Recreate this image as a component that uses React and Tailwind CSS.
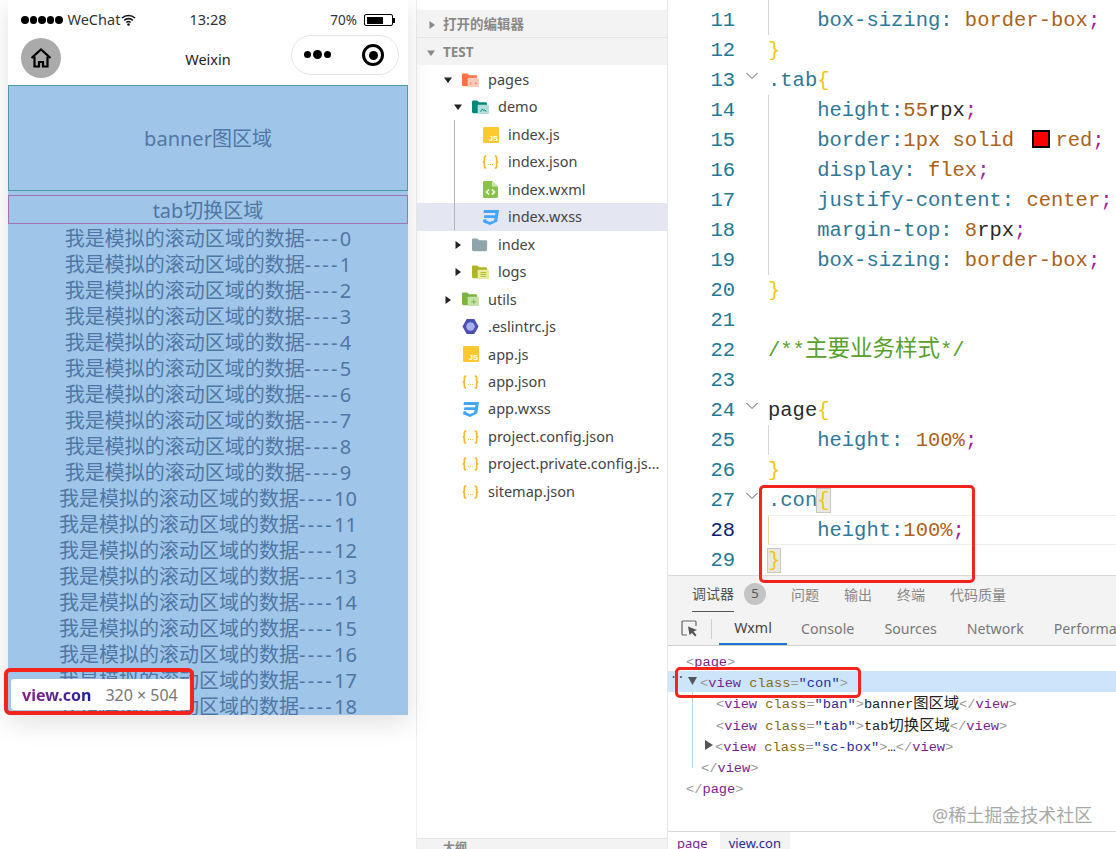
import React from "react";

const UI = "font-['Noto_Sans','Noto_Sans_CJK_SC',sans-serif]";
const MONO = "font-['Liberation_Mono','Noto_Sans_CJK_SC',monospace]";

function Caret({ open, dark, className = "" }) {
  const fill = dark ? "#222" : "#888";
  return (
    <svg width="8" height="8" viewBox="0 0 8 8" className={className}>
      {open ? <path d="M0 1.500h8L4 7z" fill={fill} /> : <path d="M1.500 0v8L7 4z" fill={fill} />}
    </svg>
  );
}

function FolderIcon({ color, light, mark }) {
  return (
    <svg width="18" height="16" viewBox="0 0 18 16">
      <path d="M0 2.500C0 1.500.7 1 1.500 1h4l2 2h7c.8 0 1.500.7 1.500 1.500V13c0 .8-.7 1.500-1.500 1.500h-13C.7 14.500 0 13.800 0 13z" fill={color} />
      {light && <rect x="6" y="5.500" width="12" height="10" rx="1" fill={light} />}
      {mark && <path d={mark} stroke={color} strokeWidth="1" fill="none" />}
    </svg>
  );
}

function JsIcon() {
  return (
    <svg width="16" height="16" viewBox="0 0 16 16">
      <rect width="16" height="16" rx="1" fill="#fdc92f" />
      <text x="15" y="14" textAnchor="end" fontSize="7.500" fontWeight="700" fill="#fff" fontFamily="Liberation Sans">JS</text>
    </svg>
  );
}

function JsonIcon() {
  return (
    <svg width="20" height="16" viewBox="0 0 20 16" fill="none" stroke="#f7b733" strokeWidth="2">
      <path d="M5 1H4C2.800 1 2.800 2 2.800 3v3C2.800 7 2 8 .8 8c1.200 0 2 1 2 2v3c0 1 0 2 1.200 2h1" />
      <path d="M15 1h1c1.200 0 1.200 1 1.200 2v3c0 1 .8 2 2 2-1.200 0-2 1-2 2v3c0 1 0 2-1.200 2h-1" />
      <path d="M7 11h1M9.500 11h1M12 11h1" strokeWidth="1.300" />
    </svg>
  );
}

function WxmlIcon() {
  return (
    <svg width="15" height="17" viewBox="0 0 15 17">
      <path d="M1.500 0H9l6 5.500V15.500c0 .8-.7 1.500-1.500 1.500h-12C.7 17 0 16.300 0 15.500v-14C0 .7.700 0 1.500 0z" fill="#8bc34a" />
      <path d="M9 0l6 5.500H9z" fill="#cfe8ad" />
      <path d="M6 8.500L3.500 11 6 13.500M9 8.500l2.500 2.500L9 13.500" stroke="#fff" strokeWidth="1.500" fill="none" />
    </svg>
  );
}

function CssIcon() {
  return (
    <svg width="17" height="15" viewBox="0 0 17 15">
      <path d="M2 0h15l-1.800 11.500L8 15l-7-2.800.5-3h3l-.3 1.400L8 12l4-1.400.5-2.500H1.900l.5-2.900h10.700l.4-2.300H1.500z" fill="#42a5f5" />
    </svg>
  );
}

function EslintIcon() {
  return (
    <svg width="18" height="17" viewBox="0 0 18 17">
      <path d="M5 .5h8l4.500 8-4.500 8H5L.5 8.500z" fill="#4b4fb0" />
      <circle cx="9" cy="8.500" r="4.500" fill="#a9b0ee" />
    </svg>
  );
}

const tree = [
  { name: "pages", depth: 0, caret: "open", icon: <FolderIcon color="#ff7043" light="#ffccbc" mark="M10 10.500l-1.500 1 1.500 1M14 10.500l1.500 1-1.500 1" /> },
  { name: "demo", depth: 1, caret: "open", icon: <FolderIcon color="#00897b" light="#b2dfdb" mark="M9 13l2-3 1.500 2 1-1 1.500 2" /> },
  { name: "index.js", depth: 2, icon: <JsIcon /> },
  { name: "index.json", depth: 2, icon: <JsonIcon /> },
  { name: "index.wxml", depth: 2, icon: <WxmlIcon /> },
  { name: "index.wxss", depth: 2, icon: <CssIcon />, active: true },
  { name: "index", depth: 1, caret: "closed", icon: <FolderIcon color="#90a4ae" /> },
  { name: "logs", depth: 1, caret: "closed", icon: <FolderIcon color="#afb42b" light="#e6ee9c" mark="M9 8.500h6M9 10.500h6M9 12.500h6" /> },
  { name: "utils", depth: 0, caret: "closed", icon: <FolderIcon color="#7cb342" light="#c5e1a5" mark="M10 11h5M12.500 8.500v5" /> },
  { name: ".eslintrc.js", depth: 0, icon: <EslintIcon /> },
  { name: "app.js", depth: 0, icon: <JsIcon /> },
  { name: "app.json", depth: 0, icon: <JsonIcon /> },
  { name: "app.wxss", depth: 0, icon: <CssIcon /> },
  { name: "project.config.json", depth: 0, icon: <JsonIcon /> },
  { name: "project.private.config.js...", depth: 0, icon: <JsonIcon /> },
  { name: "sitemap.json", depth: 0, icon: <JsonIcon /> },
];

const P = ({ children }) => <span className="text-[#2f7898]">{children}</span>;
const V = ({ children }) => <span className="text-[#ab6219]">{children}</span>;
const S = () => <span className="text-[#a31fa3]">;</span>;
const B = ({ children }) => <span className="text-[#f2c511]">{children}</span>;
const K = ({ children }) => <span className="text-[#2b2b2b]">{children}</span>;

const code = [
  { n: 10, guide: true, body: <>{"    "}<P>justify-content:</P>{" "}<V>center</V><S /></> },
  { n: 11, guide: true, body: <>{"    "}<P>box-sizing:</P>{" "}<V>border-box</V><S /></> },
  { n: 12, body: <B>{"}"}</B> },
  { n: 13, fold: true, body: <><P>.tab</P><B>{"{"}</B></> },
  { n: 14, guide: true, body: <>{"    "}<P>height:</P><V>55</V><K>rpx</K><S /></> },
  { n: 15, guide: true, body: <>{"    "}<P>border:</P><V>1px solid</V>{" "}<span className="inline-block w-[18px] h-[18px] bg-[#f00] border-2 border-black align-[-2px] ml-[6px] mr-[5px]"></span><V>red</V><S /></> },
  { n: 16, guide: true, body: <>{"    "}<P>display:</P>{" "}<V>flex</V><S /></> },
  { n: 17, guide: true, body: <>{"    "}<P>justify-content:</P>{" "}<V>center</V><S /></> },
  { n: 18, guide: true, body: <>{"    "}<P>margin-top:</P>{" "}<V>8</V><K>rpx</K><S /></> },
  { n: 19, guide: true, body: <>{"    "}<P>box-sizing:</P>{" "}<V>border-box</V><S /></> },
  { n: 20, body: <B>{"}"}</B> },
  { n: 21, body: "" },
  { n: 22, body: <span className="text-[#5aa02c]">/**<span className="text-[22.500px]">主要业务样式</span>*/</span> },
  { n: 23, body: "" },
  { n: 24, fold: true, body: <><K>page</K><B>{"{"}</B></> },
  { n: 25, guide: true, body: <>{"    "}<P>height:</P>{" "}<V>100%</V><S /></> },
  { n: 26, body: <B>{"}"}</B> },
  { n: 27, fold: true, body: <><P>.con</P><span className="bg-[#e8e8e0] outline outline-[#c8c8c0]"><B>{"{"}</B></span></> },
  { n: 28, current: true, guide: true, body: <>{"    "}<P>height:</P><V>100%</V><S /></> },
  { n: 29, body: <span className="bg-[#e8e8e0] outline outline-[#c8c8c0]"><B>{"}"}</B></span> },
];

const Tag = ({ children }) => <span className="text-[#7a1f8f]">{children}</span>;
const Attr = ({ children }) => <span className="text-[#8a6a10]">{children}</span>;
const Val = ({ children }) => <span className="text-[#1f2f9f]">{children}</span>;
const G = ({ children }) => <span className="text-[#999]">{children}</span>;
const Open = ({ cls }) => (
  <><G>{"<"}</G><Tag>view</Tag>{" "}<Attr>class</Attr><G>=</G><Val>"{cls}"</Val><G>{">"}</G></>
);
const Close = ({ name = "view" }) => <><G>{"</"}</G><Tag>{name}</Tag><G>{">"}</G></>;
const Cjk = ({ children }) => <span className="text-[15.300px] text-[#222]">{children}</span>;

function Phone() {
  return (
    <div className={`w-[400px] h-[715px] flex flex-col shadow-[0_8px_24px_rgba(0,0,0,0.12)] bg-white overflow-hidden ${UI}`}>
      <div className="h-[38px] shrink-0 grid grid-cols-[1fr_auto_1fr] items-center px-[13px] text-[14.500px] text-[#333] pt-[2px]">
        <div className="flex items-center">
          <div className="flex gap-[1px] mr-[5px]">
            {[0, 1, 2, 3, 4].map((i) => <span key={i} className="w-[7.500px] h-[7.500px] rounded-full bg-black"></span>)}
          </div>
          <span>WeChat</span>
          <svg width="15" height="12" viewBox="0 0 15 12" className="ml-[1px]">
            <path d="M1 4a9.500 9.500 0 0 1 13 0M3.200 6.300a6.300 6.300 0 0 1 8.600 0M5.300 8.500a3.300 3.300 0 0 1 4.400 0" stroke="#111" strokeWidth="1.600" fill="none" />
            <circle cx="7.500" cy="10.500" r="1.300" fill="#111" />
          </svg>
        </div>
        <span>13:28</span>
        <div className="flex items-center justify-end">
          <span className="text-[13.500px]">70%</span>
          <div className="ml-[7px] w-[29px] h-[12px] border border-black rounded-[2px] p-[1.500px]">
            <div className="w-[70%] h-full bg-black"></div>
          </div>
          <span className="w-[2px] h-[5px] bg-black"></span>
        </div>
      </div>
      <div className="h-[47px] shrink-0 grid grid-cols-[1fr_auto_1fr] items-start px-[13px] text-[14.500px] text-[#222]">
        <div className="w-[40px] h-[40px] rounded-full bg-[#aaaaaa] flex items-center justify-center">
          <svg width="22" height="20" viewBox="0 0 22 20" fill="none" stroke="#000" strokeWidth="2.200">
            <path d="M1.500 10L11 1.500 20.500 10" />
            <path d="M4.500 8.500V18.500H9V14h4v4.500h4.500V8.500" />
          </svg>
        </div>
        <span className="mt-[11px]">Weixin</span>
        <div className="justify-self-end -mt-[3px] mr-[-4px] w-[108px] h-[40px] rounded-full border border-[#e5e5e5] flex items-center pl-[12px] pr-[14px] justify-between">
          <div className="flex items-center gap-[2px] -mt-[2px]">
            <span className="w-[7px] h-[7px] rounded-full bg-black"></span>
            <span className="w-[9px] h-[9px] rounded-full bg-black"></span>
            <span className="w-[7px] h-[7px] rounded-full bg-black"></span>
          </div>
          <span className="w-[22px] h-[22px] rounded-full border-[3px] border-black flex items-center justify-center">
            <span className="w-[9px] h-[9px] rounded-full bg-black"></span>
          </span>
        </div>
      </div>
      <div className="flex-1 bg-[#9fc5e8] text-[#4f77a5] flex flex-col min-h-0 overflow-hidden">
        <div className="h-[106px] shrink-0 border border-[#4b9aa5] flex items-center justify-center text-[20px] pt-[2px]">banner图区域</div>
        <div className="h-[29px] shrink-0 mt-[4px] border border-[#a273ae] flex items-center justify-center text-[20px] pt-[2px]">tab切换区域</div>
        <div className="text-center text-[20px] pt-[2px]">
          {Array.from({ length: 19 }, (_, i) => (
            <div key={i} className="h-[26px] leading-[26px]">我是模拟的滚动区域的数据<span className="tracking-[2.300px]">----</span>{i}</div>
          ))}
        </div>
      </div>
    </div>
  );
}

function FileTree() {
  return (
    <div className={`w-[251px] shrink-0 h-full border-r border-[#e6e6e6] flex flex-col relative ${UI}`}>
      <div className="h-[10px]"></div>
      <div className="h-[28px] bg-[#f3f3f3] border-b border-[#e4e4e4] flex items-center pl-[11px] pt-[2px] text-[13.500px] font-bold text-[#888]">
        <Caret />
        <span className="ml-[7px]">打开的编辑器</span>
      </div>
      <div className="h-[27px] bg-[#f3f3f3] flex items-center pl-[10px] pt-[2px] text-[13.500px] font-bold text-[#888]">
        <Caret open />
        <span className="ml-[8px]">TEST</span>
      </div>
      <div className="flex-1 relative pt-[1px] text-[14.500px] text-[#444]">
        {tree.map((f) => (
          <div key={f.name} className={`h-[27.470px] flex items-center whitespace-nowrap ${f.active ? "bg-[#e4e6f1]" : ""}`}>
            <div className={`relative flex items-center h-full ${f.depth === 0 ? "pl-[45px]" : f.depth === 1 ? "pl-[55px]" : "pl-[65px]"}`}>
              {f.caret && (
                <Caret dark open={f.caret === "open"} className="absolute -ml-[18px] top-[10px]" />
              )}
              <span className="w-[17px] flex justify-center shrink-0">{f.icon}</span>
              <span className="ml-[9px]">{f.name}</span>
            </div>
          </div>
        ))}
        <div className="absolute left-[37px] top-[55px] h-[110px] w-px bg-[#b5b5b5]"></div>
      </div>
      <div className="h-[11px] border-t border-[#e4e4e4] bg-[#f3f3f3] overflow-hidden pl-[26px] text-[12px] font-bold text-[#888] leading-[18px]">大纲</div>
    </div>
  );
}

function CodePanel() {
  return (
    <div className={`h-[575px] shrink-0 overflow-hidden ${MONO} text-[20.500px] relative`}>
      <div className="-mt-[25px]">
        {code.map((l) => (
          <div key={l.n} className="h-[30px] flex items-center whitespace-pre">
            <div className={`w-[67px] shrink-0 text-right pt-[2px] ${l.current ? "text-[#0b216f]" : "text-[#237893]"}`}>{l.n}</div>
            <div className="w-[33px] shrink-0 flex justify-center">
              {l.fold && (
                <svg width="14" height="8" viewBox="0 0 14 8" className="-mt-[8px]">
                  <path d="M1.500 1L7 6.500 12.500 1" stroke="#555" strokeWidth="1" fill="none" />
                </svg>
              )}
            </div>
            <div className={`flex-1 h-full flex items-center ${l.guide ? "border-l border-[#d4d4d4]" : ""} ${l.current ? "border-y border-y-[#eeeeee] border-l-[#e8d9a0]" : ""}`}>
              <div className={`whitespace-pre pt-[2px] ${l.guide ? "-ml-px" : ""}`}>{l.body}</div>
            </div>
          </div>
        ))}
      </div>
    </div>
  );
}

function Devtools() {
  const rows = [
    { pad: "pl-[18px]", body: <><G>{"<"}</G><Tag>page</Tag><G>{">"}</G></> },
    { pad: "pl-[32px]", active: true, body: <Open cls="con" /> },
    { pad: "pl-[48px]", body: <><Open cls="ban" /><span className="text-[#222]">banner</span><Cjk>图区域</Cjk><Close /></> },
    { pad: "pl-[48px]", body: <><Open cls="tab" /><span className="text-[#222]">tab</span><Cjk>切换区域</Cjk><Close /></> },
    { pad: "pl-[47px]", body: <><Open cls="sc-box" /><span className="text-[#222]">…</span><Close /></> },
    { pad: "pl-[33px]", body: <Close /> },
    { pad: "pl-[18px]", body: <Close name="page" /> },
  ];
  return (
    <div className={`flex-1 flex flex-col min-h-0 border-t border-[#d8d8d8] ${UI}`}>
      <div className="h-[70px] shrink-0 bg-[#f3f3f3] border-b border-[#d0d0d0] flex flex-col">
        <div className="h-[36px] shrink-0 flex items-stretch text-[14px] text-[#888] pl-[24px] whitespace-nowrap">
          <span className="text-[#555] border-b border-[#555] flex items-center w-[42px]">调试器</span>
          <span className="ml-[10px] self-center w-[22px] h-[22px] rounded-full bg-[#c4c4c4] text-[#555] text-[13px] flex items-center justify-center">5</span>
          <span className="ml-[25px] flex items-center">问题</span>
          <span className="ml-[25px] flex items-center">输出</span>
          <span className="ml-[25px] flex items-center">终端</span>
          <span className="ml-[25px] flex items-center">代码质量</span>
        </div>
        <div className="flex-1 flex items-stretch text-[14.200px] text-[#777] whitespace-nowrap overflow-hidden">
          <div className="w-[43px] shrink-0 flex items-center pl-[13px]">
            <svg width="17" height="17" viewBox="0 0 17 17" fill="none">
              <path d="M6 15H2a1 1 0 0 1-1-1V2a1 1 0 0 1 1-1h12a1 1 0 0 1 1 1v4" stroke="#666" strokeWidth="1.200" />
              <path d="M7 6.500l9 3.500-3.500 1.500 3 3.500-1.500 1.500-3-3.500L8.500 15z" fill="#555" />
            </svg>
          </div>
          <div className="w-px h-[20px] shrink-0 self-center bg-[#d0d0d0]"></div>
          <div className="ml-[7px] w-[68px] shrink-0 border-b-2 border-[#1976d2] text-[#444] flex items-center justify-center">Wxml</div>
          <div className="ml-[14px] shrink-0 flex items-center">Console</div>
          <div className="ml-[30px] shrink-0 flex items-center">Sources</div>
          <div className="ml-[30px] shrink-0 flex items-center">Network</div>
          <div className="ml-[30px] shrink-0 flex items-center">Performance</div>
        </div>
      </div>
      <div className={`flex-1 min-h-0 relative pt-[4px] text-[13.700px] ${MONO}`}>
        {rows.map((r, i) => (
          <div key={i} className={`h-[21.200px] leading-[25px] whitespace-pre ${r.pad} ${r.active ? "bg-[#cce5fb]" : ""}`}>{r.body}</div>
        ))}
        <span className="absolute left-[2px] top-[22px] text-[#444] text-[12px] leading-[21px]">··</span>
        <svg width="9" height="8" viewBox="0 0 9 8" className="absolute left-[20px] top-[31px]"><path d="M0 0h9L4.500 8z" fill="#555" /></svg>
        <svg width="8" height="10" viewBox="0 0 8 10" className="absolute left-[37px] top-[94px]"><path d="M0 0l8 5-8 5z" fill="#555" /></svg>
        <div className="absolute left-[24px] top-[46px] h-[76px] w-px bg-[#b8d4ea]"></div>
      </div>
      <div className="h-[18px] shrink-0 border-t border-[#d8d8d8] flex text-[13px] text-[#7a1f8f] overflow-hidden leading-[22px]">
        <span className="ml-[9px]">page</span>
        <span className="ml-[12px] px-[9px] bg-[#f3f3f3] text-[#2a2a8f] h-full">view.con</span>
      </div>
    </div>
  );
}

export default function App() {
  return (
    <div className="relative w-[1116px] h-[849px] overflow-hidden bg-white flex">
      <div className="w-[417px] shrink-0 h-full border-r border-[#ececec] pl-[8px]">
        <Phone />
      </div>
      <FileTree />
      <div className="flex-1 min-w-0 h-full flex flex-col">
        <CodePanel />
        <Devtools />
      </div>

      {/* 截图上标注的红框 */}
      <div className={`absolute left-[11px] top-[679px] w-[180px] h-[31px] bg-white rounded-[3px] flex items-center pl-[11px] text-[16px] whitespace-nowrap ${UI}`}>
        <span className="font-bold bg-gradient-to-r from-[#8a1580] to-[#1c1c96] bg-clip-text text-transparent">view.con</span>
        <span className="ml-[14px] text-[#777]">320 × 504</span>
      </div>
      <div className="absolute left-[4px] top-[668px] w-[190px] h-[47px] border-[4px] border-[#f4231c] rounded-[6px]"></div>
      <div className="absolute left-[759px] top-[485px] w-[216px] h-[98px] border-[3px] border-[#f4231c] rounded-[5px]"></div>
      <div className="absolute left-[675px] top-[667px] w-[186px] h-[31px] border-[3px] border-[#f4231c] rounded-[5px]"></div>
      <div className={`absolute left-[932px] top-[802px] text-[18px] leading-[26px] text-[#a8a8a8] whitespace-nowrap ${UI}`}>@稀土掘金技术社区</div>
    </div>
  );
}
